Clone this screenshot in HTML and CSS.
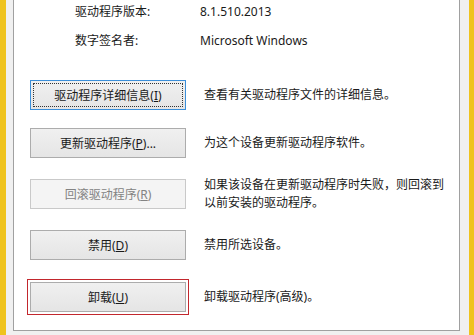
FILE: index.html
```html
<!DOCTYPE html>
<html lang="zh-CN">
<head>
    <meta charset="UTF-8">
    <title>驱动程序</title>
    <link rel="stylesheet" href="styles.css">
</head>
<body>
    <div class="frame">
        <div class="panel">
            <!-- Driver info -->
            <div class="info">
                <span class="info-label">驱动程序版本:</span>
                <span class="info-value">8.1.510.2013</span>
                <span class="info-label">数字签名者:</span>
                <span class="info-value">Microsoft Windows</span>
            </div>

            <!-- Driver actions -->
            <div class="actions">
                <div class="action-row">
                    <button class="btn btn-focused">驱动程序详细信息(<u>I</u>)</button>
                    <p class="action-desc">查看有关驱动程序文件的详细信息。</p>
                </div>
                <div class="action-row">
                    <button class="btn">更新驱动程序(<u>P</u>)...</button>
                    <p class="action-desc">为这个设备更新驱动程序软件。</p>
                </div>
                <div class="action-row">
                    <button class="btn" disabled>回滚驱动程序(<u>R</u>)</button>
                    <p class="action-desc">如果该设备在更新驱动程序时失败，则回滚到以前安装的驱动程序。</p>
                </div>
                <div class="action-row">
                    <button class="btn">禁用(<u>D</u>)</button>
                    <p class="action-desc">禁用所选设备。</p>
                </div>
                <div class="action-row action-row-marked">
                    <button class="btn btn-marked">卸载(<u>U</u>)</button>
                    <p class="action-desc">卸载驱动程序(高级)。</p>
                </div>
            </div>
        </div>
    </div>
</body>
</html>
```

FILE: styles.css
```css
body {
    margin: 0;
    background: #f0f0f0;
    font-family: "Noto Sans", "Noto Sans CJK SC", sans-serif;
    font-size: 12px;
    color: #1a1a1a;
}
.frame {
    display: flex;
    height: 335px;
    border-left: 6px solid #efc31d;
    border-right: 5px solid #efc31d;
    background: #f0f0f0;
}
.panel {
    flex: 1;
    margin: 0 9px 4px 7px;
    background: #fff;
    border: 1px solid #a0a0a0;
    border-top: none;
    padding: 3px 0 0 16px;
}
.info {
    display: grid;
    grid-template-columns: 125px auto;
    row-gap: 11px;
    margin-left: 45px;
    line-height: 18px;
}
.actions {
    display: flex;
    flex-direction: column;
    gap: 18px;
    margin-top: 30px;
}
.action-row {
    display: flex;
    align-items: center;
    gap: 18px;
}
.action-row-marked {
    margin-top: 4px;
}
.action-desc {
    margin: 0;
    max-width: 246px;
    line-height: 18px;
}
.btn {
    position: relative;
    flex: none;
    width: 156px;
    height: 30px;
    padding: 0;
    border: 1px solid #acacac;
    background: linear-gradient(#f0f0f0, #e5e5e5);
    font: inherit;
    color: #1a1a1a;
}
.btn u {
    text-underline-offset: 1px;
}
.btn:disabled {
    background: #f4f4f4;
    border-color: #c9c9c9;
    color: #838383;
}
.btn-focused {
    border-color: #3c8fd9;
}
.btn-focused::before {
    content: "";
    position: absolute;
    inset: 2px;
    border: 1px dotted #333;
}
.btn-marked {
    outline: 1px solid #c2272d;
    outline-offset: 2px;
}
```
